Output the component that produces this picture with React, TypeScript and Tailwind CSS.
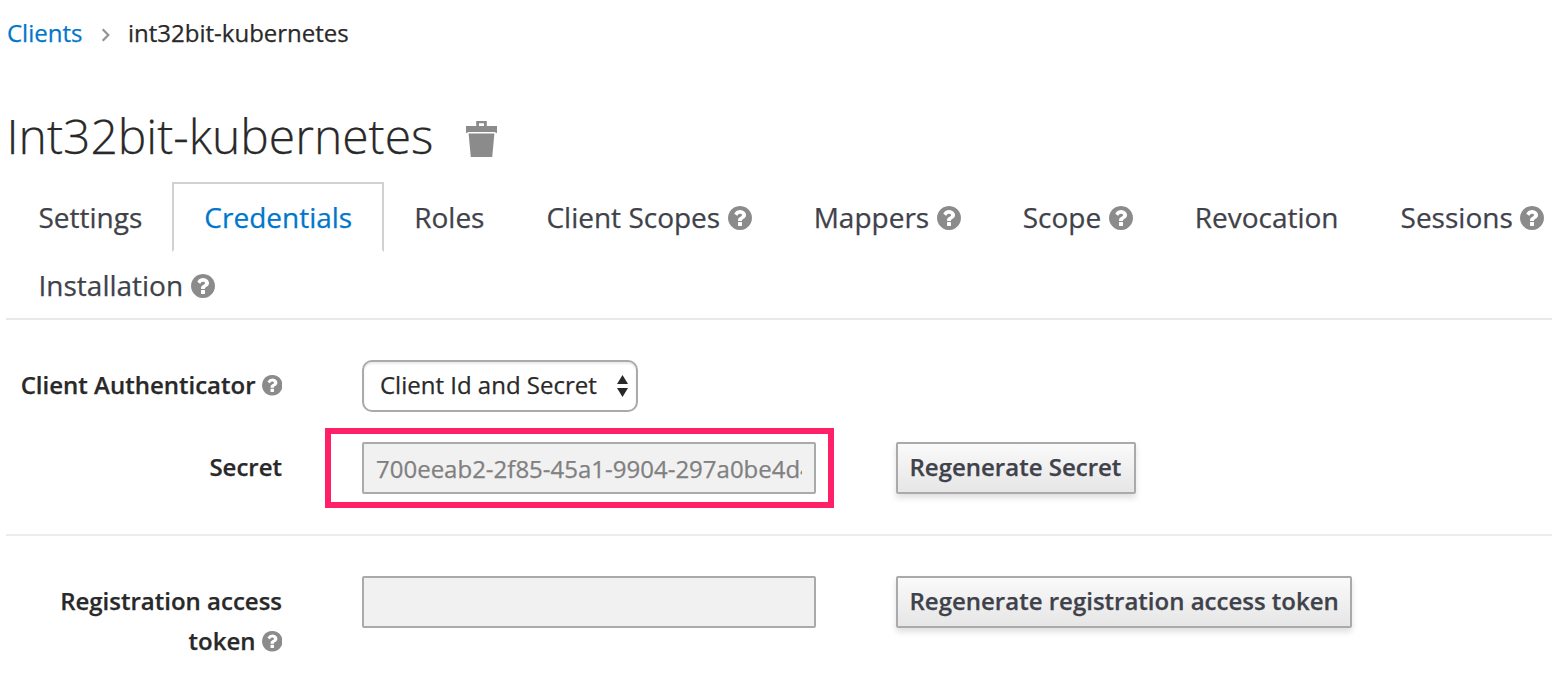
import type { ReactNode } from "react";

function HelpIcon({ className }: { className: string }) {
  return (
    <svg viewBox="128 128 1536 1536" className={className} fill="#8b8b8b" aria-hidden="true">
      <path d="M1024 1376v-192q0-14-9-23t-23-9h-192q-14 0-23 9t-9 23v192q0 14 9 23t23 9h192q14 0 23-9t9-23zM1280 704q0-88-55.5-163t-138.5-116-170-41q-243 0-371 213-15 24 8 42l132 100q7 6 19 6 16 0 25-12 53-68 86-92 34-24 86-24 48 0 85.5 26t37.5 59q0 38-20 61t-68 45q-63 28-115.5 86.5t-52.5 125.5v36q0 14 9 23t23 9h192q14 0 23-9t9-23q0-19 21.5-49.5t54.5-49.5q32-18 49-28.5t46-35 44.5-48 28-60.5 12.5-81zM1664 896q0 209-103 385.5t-279.5 279.5-385.5 103-385.5-103-279.5-279.5-103-385.5 103-385.5 279.5-279.5 385.5-103 385.5 103 279.5 279.5 103 385.5z" />
    </svg>
  );
}

const tabs = [
  { name: "Settings" },
  { name: "Credentials", active: true },
  { name: "Roles" },
  { name: "Client Scopes", help: true },
  { name: "Mappers", help: true },
  { name: "Scope", help: true },
  { name: "Revocation" },
  { name: "Sessions", help: true },
  { name: "Installation", help: true },
];

function Tab({ name, active, help }: { name: string; active?: boolean; help?: boolean }) {
  return (
    <li
      className={
        active
          ? "-mr-[2px] -mb-[2px] flex h-[70px] items-center border-2 border-[#d1d1d1] border-b-transparent pr-[29.5px] pl-[30.5px] text-[#0077cb]"
          : "-mr-[2px] -mb-[2px] flex h-[70px] items-center border-2 border-transparent pr-[29.5px] pl-[30.5px] text-[#3f424a]"
      }
    >
      <a className="whitespace-nowrap">{name}</a>
      {help && <HelpIcon className="mt-[2px] ml-[7.5px] size-6 shrink-0" />}
    </li>
  );
}

function PushButton({ width, children }: { width: string; children: ReactNode }) {
  return (
    <button
      className={`${width} h-[52px] rounded-[2px] border-2 border-[#aaaaaa] bg-linear-to-b from-[#fafafa] to-[#e6e6e6] pb-[2px] pl-[11.5px] text-left font-semibold whitespace-nowrap text-[#3f424a] shadow-[0_4px_6px_rgba(3,3,3,0.13)]`}
    >
      {children}
    </button>
  );
}

export default function App() {
  return (
    <div className="h-[682px] overflow-hidden bg-white pl-[6px] font-['Open_Sans',sans-serif] text-[24px] leading-[40px] text-[#292929] [-webkit-text-stroke:0.25px_currentColor]">
      <nav className="flex h-[66px] items-center pl-[1px]">
        <a className="w-[75px] text-[#0077cb]">Clients</a>
        <svg viewBox="0 0 10 14" className="mt-[3px] mr-[17px] ml-[19px] h-[14px] w-[10px]" fill="none" stroke="#939393" strokeWidth="2.2">
          <path d="M1.700 1.200 7.300 7 1.700 12.800" />
        </svg>
        <span>int32bit-kubernetes</span>
      </nav>

      <h1 className="flex h-[116px] items-center pt-[24px] text-[48px] font-light">
        <span className="pl-[0.5px]">Int32bit-kubernetes</span>
        <svg viewBox="0 0 31 36" className="mt-[5px] ml-[32.5px] h-9 w-[31px]" fill="#8b8b8b">
          <path fillRule="evenodd" d="M10.200 0H20.800V5H31V12.300L28.500 11H2.500L0 12.300V5H10.200zM13 2.200V5H18V2.200z" />
          <path d="M2.600 12.600H28.400L26.200 36H4.800z" />
        </svg>
      </h1>

      <div className="h-[138px] border-b-2 border-[#e9e9e9]">
        <ul className="-mr-10 flex flex-wrap content-start text-[28px]">
          {tabs.map((tab) => (
            <Tab key={tab.name} {...tab} />
          ))}
        </ul>
      </div>

      <section className="h-[216px] border-b-2 border-[#ededed] pt-10">
        <div className="flex h-[52px] items-center">
          <label className="flex w-[276px] items-center justify-end pb-[2px] font-semibold">
            Client Authenticator
            <HelpIcon className="mt-[1px] ml-[6px] size-[20.5px]" />
          </label>
          <div className="ml-20 flex h-[52px] w-[276px] items-center justify-between rounded-[10px] border-2 border-[#aaaaaa] pr-[8px] pb-[2px] pl-4 shadow-[inset_0_2px_2px_rgba(3,3,3,0.08)]">
            <span className="whitespace-nowrap">Client Id and Secret</span>
            <svg viewBox="0 0 11 22" className="mt-[2px] h-[22px] w-[11px]" fill="#292929">
              <path d="M5.500 0 11 9H0zM0 13h11l-5.500 9z" />
            </svg>
          </div>
        </div>
        <div className="mt-4 flex h-20 items-center">
          <label className="w-[276px] pb-[2px] text-right font-semibold">Secret</label>
          <div className="ml-[43px] h-20 w-[509px] border-[6px] border-[#ff2068] px-[31px] py-2">
            <div className="h-[52px] w-[454px] rounded-[2px] border-2 border-[#aaaaaa] bg-[#f1f1f1] px-3 pt-[5px] text-[#808080]">
              <div className="overflow-hidden whitespace-nowrap">700eeab2-2f85-45a1-9904-297a0be4d4c7</div>
            </div>
          </div>
          <div className="ml-[62px] flex">
            <PushButton width="w-[240px]">Regenerate Secret</PushButton>
          </div>
        </div>
      </section>

      <section className="flex items-start pt-10">
        <label className="w-[276px] pt-[5px] text-right font-semibold">
          Registration access
          <span className="flex items-center justify-end">
            token
            <HelpIcon className="mt-[1px] ml-[6px] size-[20.5px]" />
          </span>
        </label>
        <div className="ml-20 h-[52px] w-[454px] rounded-[2px] border-2 border-[#aaaaaa] bg-[#f1f1f1]" />
        <div className="ml-20 flex">
          <PushButton width="w-[456px]">Regenerate registration access token</PushButton>
        </div>
      </section>
    </div>
  );
}
